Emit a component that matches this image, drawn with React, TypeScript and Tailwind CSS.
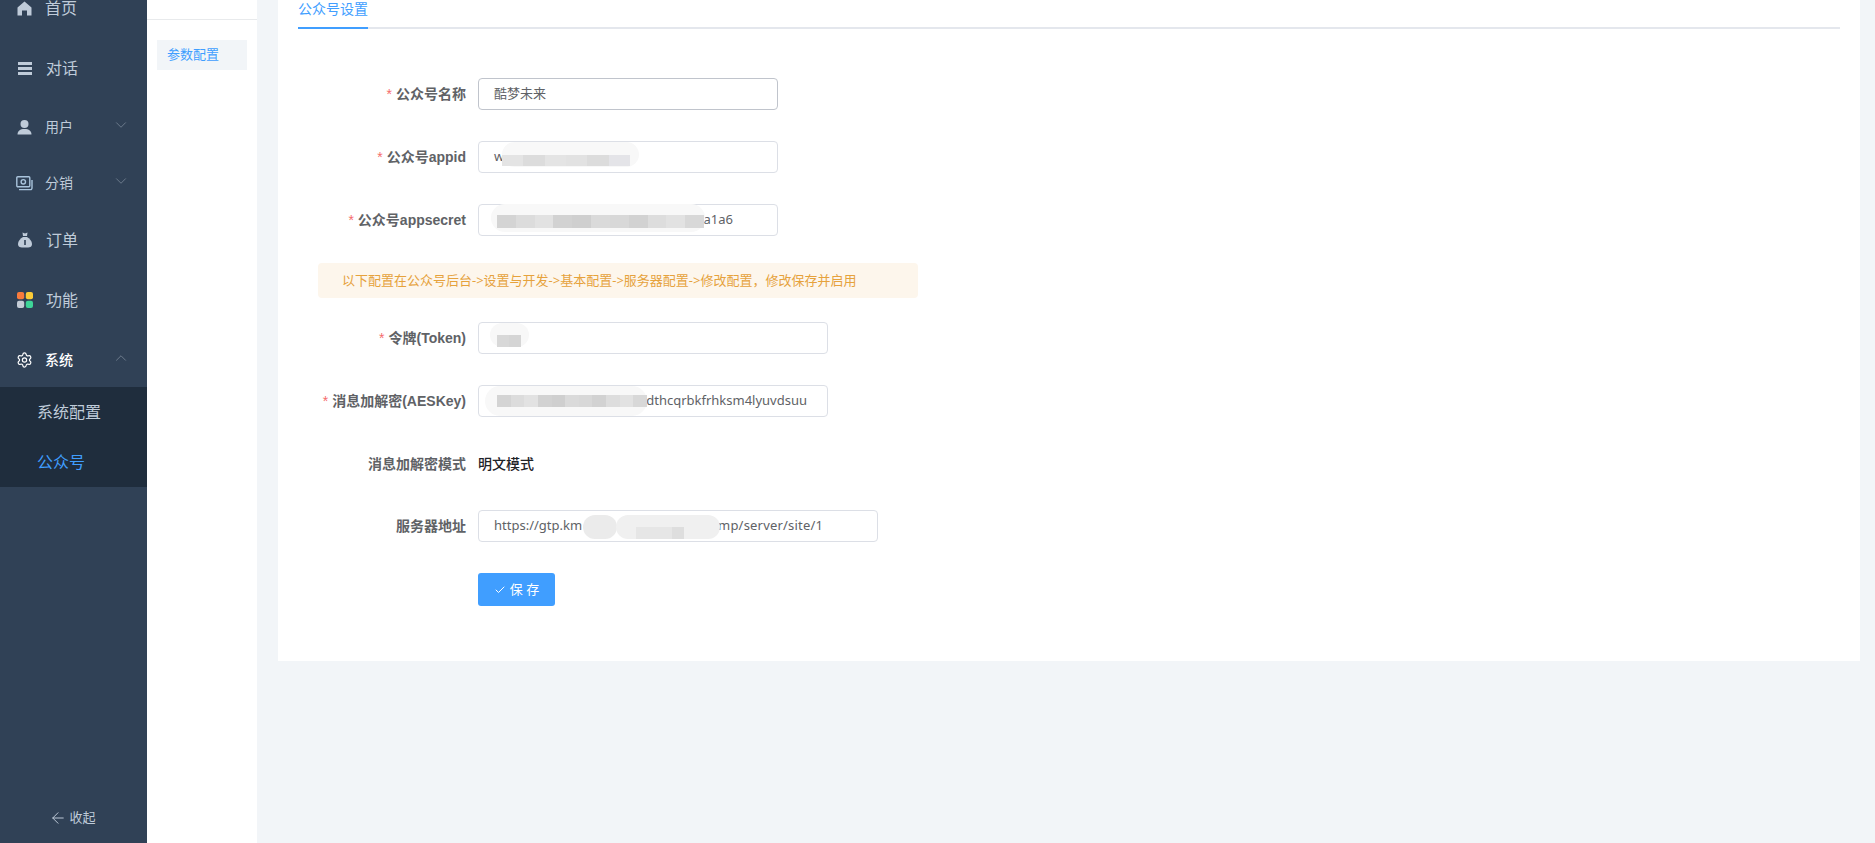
import { ArrowLeft, Check, ChevronDown, ChevronUp, Settings } from 'lucide-react';
import { ReactNode } from 'react';

const font = "font-['Noto_Sans','Noto_Sans_CJK_SC',sans-serif]";

function HomeIcon() {
  return (
    <svg width="15" height="15" viewBox="0 0 15 15" fill="#bfcbd9">
      <path d="M7.5 0.5 14.5 6.5V14.5H10V9.5H5V14.5H0.5V6.5Z" strokeLinejoin="round" />
    </svg>
  );
}

function ListIcon() {
  return (
    <svg width="14" height="13" viewBox="0 0 14 13" fill="#bfcbd9">
      <rect x="0" y="0" width="14" height="3" />
      <rect x="0" y="5" width="14" height="3" />
      <rect x="0" y="10" width="14" height="3" />
    </svg>
  );
}

function UserIcon() {
  return (
    <svg width="15" height="15" viewBox="0 0 15 15" fill="#bfcbd9">
      <ellipse cx="7.5" cy="4" rx="4" ry="4" />
      <path d="M0.5 14.5c0-3.5 2.5-5.5 7-5.5s7 2 7 5.5Z" />
    </svg>
  );
}

function MoneyIcon() {
  return (
    <svg width="17" height="15" viewBox="0 0 17 15" fill="none" stroke="#a9c4dc" strokeWidth="1.4">
      <rect x="0.8" y="0.8" width="13" height="10" rx="1" />
      <circle cx="7.3" cy="5.8" r="2.2" />
      <path d="M3 13.6h11.5a1.5 1.5 0 0 0 1.5-1.5V4" />
    </svg>
  );
}

function BagIcon() {
  return (
    <svg width="14" height="16" viewBox="0 0 14 16" fill="#bfcbd9">
      <path d="M4.5 0.5 7 1.5 9.5 0.5 9 4H5Z" />
      <path d="M5 5h4c2.5 1.5 5 4 5 7 0 3-2 3.5-7 3.5S0 15 0 12c0-3 2.5-5.5 5-7Z" />
      <rect x="6.2" y="8" width="1.6" height="5" fill="#304156" />
    </svg>
  );
}

function AppsIcon() {
  return (
    <svg width="16" height="16" viewBox="0 0 16 16">
      <rect x="0" y="0" width="7.2" height="7.2" rx="2" fill="#f97b3c" />
      <rect x="8.8" y="0" width="7.2" height="7.2" rx="2" fill="#fbcb37" />
      <rect x="0" y="8.8" width="7.2" height="7.2" rx="2" fill="#c4ccd6" />
      <rect x="8.8" y="8.8" width="7.2" height="7.2" rx="2" fill="#3ed598" />
    </svg>
  );
}

function NavItem({ icon, label, labelClass, active, open, chevron }: { icon: ReactNode; label: string; labelClass: string; active?: boolean; open?: boolean; chevron?: boolean }) {
  return (
    <div className="flex h-[60px] items-center pl-4 pr-[17px]">
      <span className="flex w-[17px] justify-center">{icon}</span>
      <span className={`${labelClass} ${active ? 'font-medium text-white' : 'text-[#bfcbd9]'}`}>{label}</span>
      {chevron && (
        <span className="-mt-1 ml-auto text-[#7f8c9c]">
          {open ? <ChevronUp size={18} strokeWidth={1} /> : <ChevronDown size={18} strokeWidth={1} />}
        </span>
      )}
    </div>
  );
}

function Sidebar() {
  return (
    <aside className="flex h-full w-[147px] shrink-0 flex-col overflow-hidden bg-[#304156]">
      <div className="-mt-[22px]">
        <NavItem icon={<HomeIcon />} label="首页" labelClass="ml-3 text-base" />
        <NavItem icon={<ListIcon />} label="对话" labelClass="ml-[13px] text-base" />
        <div className="-mt-[1px]">
          <NavItem icon={<UserIcon />} label="用户" labelClass="ml-3 text-sm" chevron />
        </div>
        <div className="-mt-[4px]">
          <NavItem icon={<MoneyIcon />} label="分销" labelClass="ml-3 text-sm" chevron />
        </div>
        <div className="-mt-[3px]">
          <NavItem icon={<BagIcon />} label="订单" labelClass="ml-[13px] text-base" />
        </div>
        <NavItem icon={<AppsIcon />} label="功能" labelClass="ml-[13px] text-base" />
        <NavItem icon={<Settings size={18} strokeWidth={1.7} color="#ffffff" />} label="系统" labelClass="ml-3 text-sm" active open chevron />
        <div className="-mt-[3px] bg-[#1f2d3d]">
          <div className="flex h-[50px] items-center pl-[37px] text-base text-[#bfcbd9]">系统配置</div>
          <div className="flex h-[50px] items-center pl-[37px] text-base text-[#409eff]">公众号</div>
        </div>
      </div>
      <div className="mt-auto flex h-[50px] items-center justify-center gap-[2px] pr-[2px] text-[13px] text-[#bfcbd9]">
        <ArrowLeft size={18} strokeWidth={1.3} />
        <span>收起</span>
      </div>
    </aside>
  );
}

function SubMenu() {
  return (
    <div className="w-[110px] shrink-0 bg-white">
      <div className="h-5 border-b border-[#e8eaec]" />
      <div className="px-[10px] pt-5">
        <div className="flex h-[30px] items-center bg-[#f2f5f8] pl-[10px] text-[13px] text-[#409eff]">参数配置</div>
      </div>
    </div>
  );
}

// redaction smear over a value: soft blob with a row of grey mosaic cells
function Mosaic({ tones, blob, cells }: { tones: string[]; blob: string; cells: string }) {
  return (
    <>
      <span className={`absolute rounded-full bg-[#f8f8f8] ${blob}`} />
      <span className={`absolute flex overflow-hidden ${cells}`}>
        {tones.map((tone, i) => (
          <span key={i} className="h-full flex-1" style={{ backgroundColor: tone }} />
        ))}
      </span>
    </>
  );
}

const labelStyle = "w-[160px] pr-3 text-right font-['Liberation_Sans','Noto_Sans_CJK_SC',sans-serif] text-sm font-bold text-[#606266]";

function Field({ label, required, value, width, focused, children }: { label: string; required?: boolean; value?: string; width: string; focused?: boolean; children?: ReactNode }) {
  return (
    <div className="flex h-8 items-center">
      <label className={labelStyle}>
        {required && <span className="mr-1 font-normal text-[#f56c6c]">*</span>}
        {label}
      </label>
      <div className={`relative flex h-8 items-center rounded border px-[15px] text-[13px] text-[#606266] ${focused ? 'border-[#c0c4cc]' : 'border-[#dcdfe6]'} ${width}`}>
        {value}
        {children}
      </div>
    </div>
  );
}

const greys = ['#d4d4d4', '#dcdcdc', '#e2e2e2', '#d2d2d2', '#cfcfcf', '#dadada', '#d8d8d8', '#d2d2d2', '#dddddd', '#e2e2e2', '#d8d8d8'];
const lights = ['#e4e4e4', '#dcdcdc', '#e4e4e4', '#e2e2e2', '#dcdcdc', '#e4e4e8'];

function SettingsForm() {
  return (
    <div className="flex w-full flex-col pl-10 pt-[78px]">
      <Field label="公众号名称" required value="酷梦未来" width="w-[300px]" focused />
      <div className="mt-[31px]">
        <Field label="公众号appid" required value="w" width="w-[300px]">
          <Mosaic tones={lights} blob="left-[23px] top-0 h-[25px] w-[137px]" cells="left-[23px] top-[13px] h-[11px] w-[128px]" />
        </Field>
      </div>
      <div className="mt-[31px]">
        <Field label="公众号appsecret" required width="w-[300px]">
          <span className="ml-auto mr-[29px]">aa1a6</span>
          <Mosaic tones={greys} blob="left-[12px] -top-px h-[28px] w-[214px]" cells="left-[18px] top-[10px] h-[13px] w-[207px]" />
        </Field>
      </div>
      <div className="mt-[27px] flex h-[35px] w-[600px] items-center rounded bg-[#fdf6ec] pl-6 text-[13px] text-[#e6a23c]">
        以下配置在公众号后台-&gt;设置与开发-&gt;基本配置-&gt;服务器配置-&gt;修改配置，修改保存并启用
      </div>
      <div className="mt-[24px]">
        <Field label="令牌(Token)" required width="w-[350px]">
          <Mosaic tones={['#d8d8d8', '#d5d5d5']} blob="left-[11px] top-0 h-6 w-[39px]" cells="left-[18px] top-[12px] h-3 w-6" />
        </Field>
      </div>
      <div className="mt-[31px]">
        <Field label="消息加解密(AESKey)" required width="w-[350px]">
          <span className="ml-auto mr-[5px]">dthcqrbkfrhksm4lyuvdsuu</span>
          <Mosaic tones={greys} blob="left-[6px] top-0 h-[30px] w-[162px]" cells="left-[18px] top-[9px] h-3 w-[150px]" />
        </Field>
      </div>
      <div className="mt-[31px] flex h-8 items-center">
        <label className={labelStyle}>消息加解密模式</label>
        <span className="text-sm font-medium text-[#1f2328]">明文模式</span>
      </div>
      <div className="mt-[30px]">
        <Field label="服务器地址" value="https://gtp.km" width="w-[400px]">
          <span className="ml-[136px] tracking-[0.2px]">mp/server/site/1</span>
          <span className="absolute left-[104px] top-1 h-6 w-[34px] rounded-full bg-[#ebebeb]" />
          <span className="absolute left-[137px] top-1 flex h-6 w-[104px] overflow-hidden rounded-full bg-[#f0f0f0]">
            <span className="mt-3 ml-5 h-3 w-9 bg-[#e6e6e6]" />
            <span className="mt-3 h-3 w-3 bg-[#dedede]" />
          </span>
        </Field>
      </div>
      <div className="ml-[160px] mt-[31px] flex h-[33px] w-[77px] items-center justify-center gap-1 rounded-[3px] bg-[#409eff] text-[13px] text-white">
        <Check size={12} />
        <span>保 存</span>
      </div>
    </div>
  );
}

export default function App() {
  return (
    <div className={`flex h-[843px] w-full overflow-hidden bg-[#f2f5f8] ${font}`}>
      <Sidebar />
      <SubMenu />
      <main className="flex-1 pl-[21px] pr-[15px]">
        <div className="relative h-[661px] bg-white pr-[21px]">
          <div className="absolute inset-x-5 top-0 h-[29px] border-b-2 border-[#e4e7ed]">
            <div className="h-[29px] w-[70px] border-b-2 border-[#409eff] text-sm leading-[18px] text-[#409eff]">公众号设置</div>
          </div>
          <SettingsForm />
        </div>
      </main>
    </div>
  );
}
